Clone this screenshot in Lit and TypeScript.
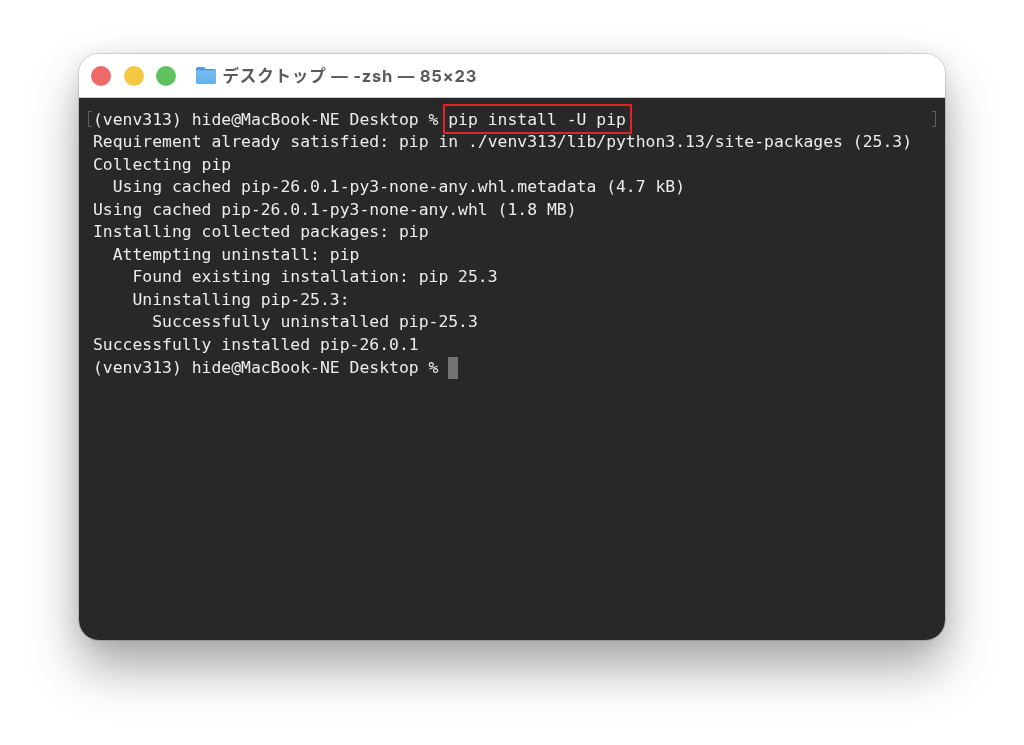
import { LitElement, html, css } from "lit";
import { customElement } from "lit/decorators.js";

const LINES = [
  "Requirement already satisfied: pip in ./venv313/lib/python3.13/site-packages (25.3)",
  "Collecting pip",
  "  Using cached pip-26.0.1-py3-none-any.whl.metadata (4.7 kB)",
  "Using cached pip-26.0.1-py3-none-any.whl (1.8 MB)",
  "Installing collected packages: pip",
  "  Attempting uninstall: pip",
  "    Found existing installation: pip 25.3",
  "    Uninstalling pip-25.3:",
  "      Successfully uninstalled pip-25.3",
  "Successfully installed pip-26.0.1",
];
const PROMPT = "(venv313) hide@MacBook-NE Desktop % ";

@customElement("app-root")
export class AppRoot extends LitElement {
  static styles = css`
    :host { display: block; height: 745px; background: #fff; overflow: hidden; box-sizing: border-box; padding: 54px 79px 0; }
    .window {
      width: 866px; height: 586px; border-radius: 20px; overflow: hidden; display: flex; flex-direction: column;
      box-shadow: 0 28px 50px rgba(0,0,0,.34), 0 0 20px rgba(0,0,0,.09), 0 0 0 1px rgba(0,0,0,.12);
    }
    .titlebar {
      height: 44px; flex: none; background: #fff; border-bottom: 1px solid #c9c9c9; box-sizing: border-box;
      display: flex; align-items: center; padding-left: 12px;
    }
    .lights { display: flex; gap: 12.5px; }
    .light { width: 20px; height: 20px; border-radius: 50%; }
    .red { background: #ee6a66; } .yellow { background: #f4c842; } .green { background: #5fc25f; }
    .folder { width: 22px; height: 19px; margin-left: 18.5px; flex: none; }
    .title {
      margin-left: 6px; color: #5b5b5b; font: 700 16.6px/1 Inter, "Noto Sans CJK JP", sans-serif; white-space: pre;
      letter-spacing: .74px; padding-top: 2px; filter: blur(.3px);
    }
    .term {
      flex: 1; background: #282828; color: #ececec; position: relative;
      padding: 10.5px 0 0 14px;
      font: 16.4px/22.55px "DejaVu Sans Mono", monospace;
      filter: blur(.35px);
    }
    .line { height: 22.55px; white-space: pre; }
    .cmd { outline: 2px solid #e0222a; padding: 3.5px 4px 3.5px 3px; margin: 0 -4px 0 -3px; }
    .cursor { display: inline-block; width: 10px; height: 22px; background: #727272; vertical-align: -6px; }
    .mark { position: absolute; top: 13px; width: 3px; height: 14px; border: 1px solid #5f5f5f; }
    .mark.l { left: 9px; border-right: 0; }
    .mark.r { right: 9px; border-left: 0; }
  `;

  render() {
    return html`
      <div class="window">
        <div class="titlebar">
          <div class="lights">
            <div class="light red"></div><div class="light yellow"></div><div class="light green"></div>
          </div>
          <svg class="folder" viewBox="0 0 22 19">
            <defs>
              <linearGradient id="fg" x1="0" y1="0" x2="0" y2="1">
                <stop offset="0" stop-color="#78bff0"/><stop offset="1" stop-color="#62aee6"/>
              </linearGradient>
            </defs>
            <path d="M1 3C1 1.8 1.8 1 3 1h5c.8 0 1.3.3 1.8.8L11 3h8c1.2 0 2 .8 2 2v4H1z" fill="#4f9ad8"/>
            <path d="M1 6c0-.9.6-1.5 1.5-1.5h17c.9 0 1.5.6 1.5 1.5v10.2c0 1-.8 1.8-1.8 1.8H2.8c-1 0-1.8-.8-1.8-1.8z" fill="url(#fg)"/>
          </svg>
          <div class="title">デスクトップ — -zsh — 85×23</div>
        </div>
        <div class="term">
          <span class="mark l"></span><span class="mark r"></span>
          <div class="line">${PROMPT}<span class="cmd">pip install -U pip</span></div>
          ${LINES.map((l) => html`<div class="line">${l}</div>`)}
          <div class="line">${PROMPT}<span class="cursor"></span></div>
        </div>
      </div>
    `;
  }
}
